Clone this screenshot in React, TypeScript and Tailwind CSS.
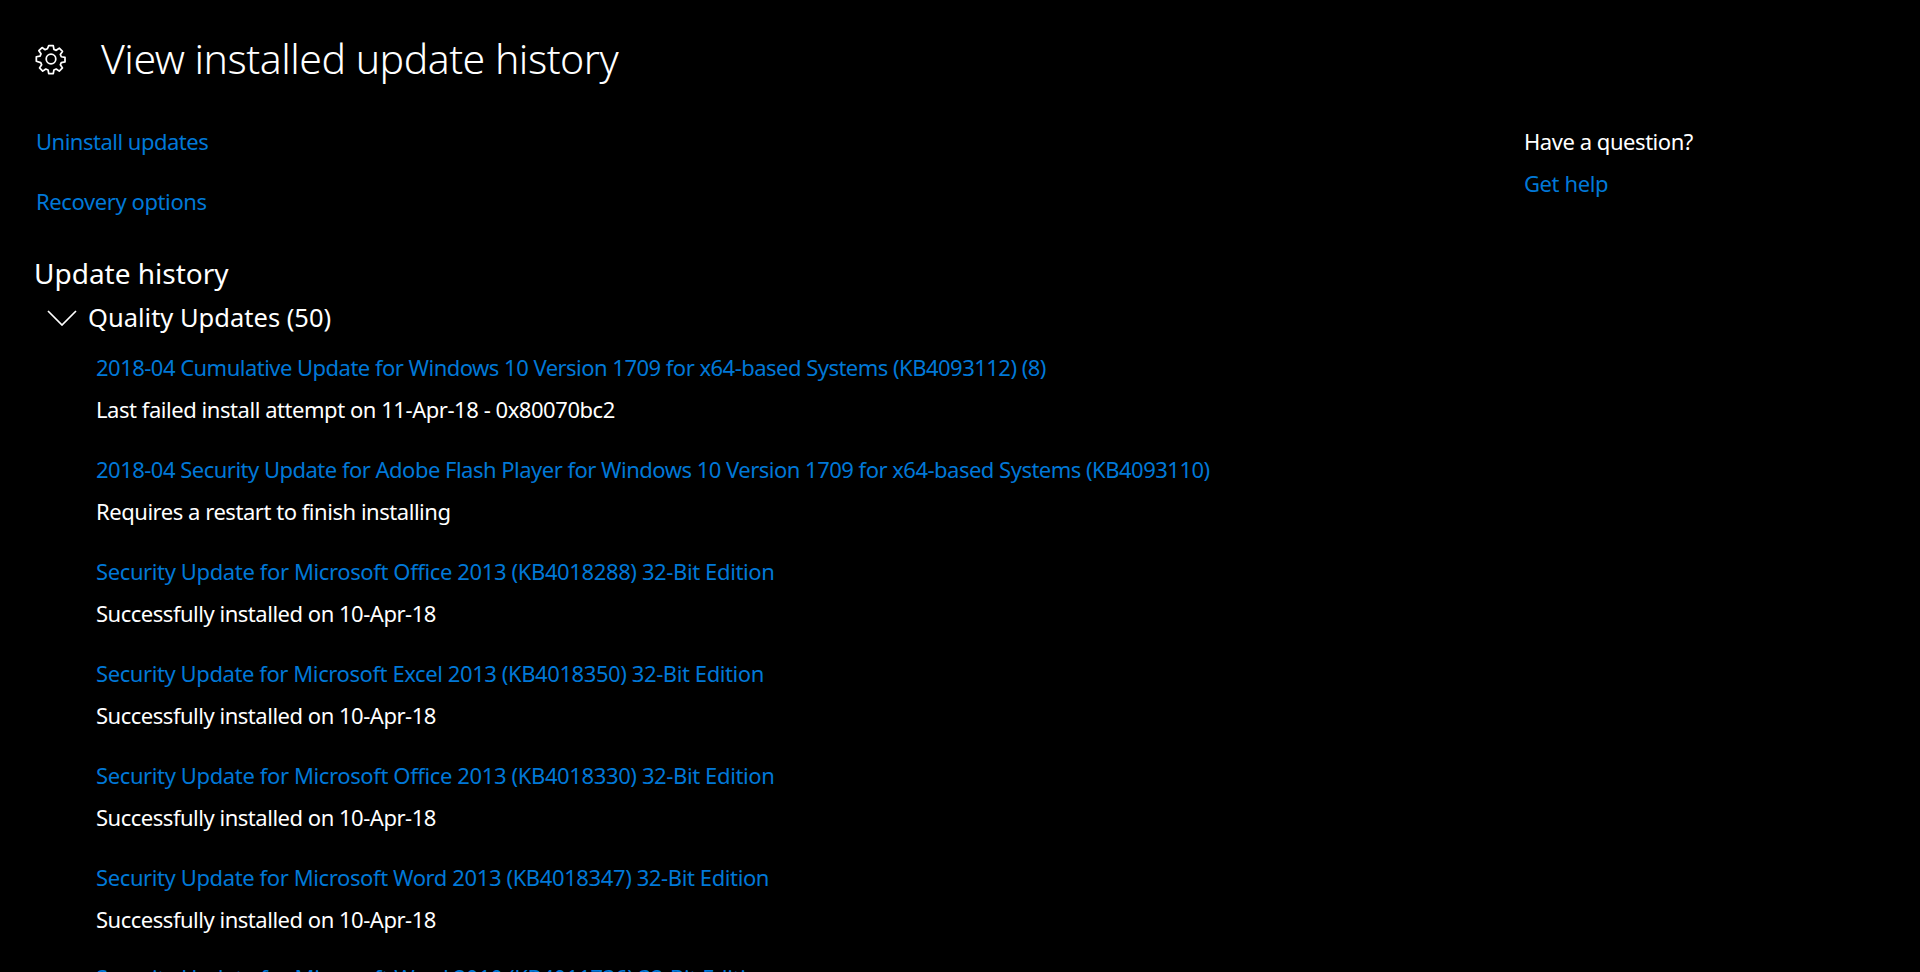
import React from "react";

const rows: { link: string; linkClass: string; status: string; statusClass: string }[] = [
  { link: "2018-04 Cumulative Update for Windows 10 Version 1709 for x64-based Systems (KB4093112) (8)", linkClass: "tracking-[-0.52px]", status: "Last failed install attempt on 11-Apr-18 - 0x80070bc2", statusClass: "tracking-[-0.45px]" },
  { link: "2018-04 Security Update for Adobe Flash Player for Windows 10 Version 1709 for x64-based Systems (KB4093110)", linkClass: "tracking-[-0.51px]", status: "Requires a restart to finish installing", statusClass: "tracking-[-0.46px]" },
  { link: "Security Update for Microsoft Office 2013 (KB4018288) 32-Bit Edition", linkClass: "tracking-[-0.38px]", status: "Successfully installed on 10-Apr-18", statusClass: "tracking-[-0.48px]" },
  { link: "Security Update for Microsoft Excel 2013 (KB4018350) 32-Bit Edition", linkClass: "tracking-[-0.41px]", status: "Successfully installed on 10-Apr-18", statusClass: "tracking-[-0.48px]" },
  { link: "Security Update for Microsoft Office 2013 (KB4018330) 32-Bit Edition", linkClass: "tracking-[-0.38px]", status: "Successfully installed on 10-Apr-18", statusClass: "tracking-[-0.48px]" },
  { link: "Security Update for Microsoft Word 2013 (KB4018347) 32-Bit Edition", linkClass: "tracking-[-0.39px]", status: "Successfully installed on 10-Apr-18", statusClass: "tracking-[-0.48px]" },
];

function Gear() {
  return (
    <svg width="32" height="32" viewBox="0 0 24 24" fill="none" stroke="white" strokeWidth="1.3" strokeLinejoin="round">
      <path d="M10.3 2h3.4l.5 2.8 1.7.7 2.3-1.6 2.4 2.4-1.6 2.3.7 1.7 2.8.5v3.4l-2.8.5-.7 1.7 1.6 2.3-2.4 2.4-2.3-1.6-1.7.7-.5 2.8h-3.4l-.5-2.8-1.7-.7-2.3 1.6-2.4-2.4 1.6-2.3-.7-1.7L1 13.7v-3.4l2.8-.5.7-1.7-1.6-2.3 2.4-2.4 2.3 1.6 1.7-.7z" />
      <circle cx="12" cy="12" r="3.6" />
    </svg>
  );
}

export default function App() {
  return (
    <div className="h-[972px] overflow-hidden bg-black text-white font-['Noto_Sans',sans-serif] text-[22px] leading-[30px] tracking-[-0.5px] flex justify-between">
      <div className="pl-[34px]">
        <div className="flex items-center h-[40px] mt-[39px] pl-[1px]">
          <Gear />
          <h1 className="ml-[34px] mb-[2px] text-[41px] font-light leading-[40px] tracking-[-0.5px]">View installed update history</h1>
        </div>
        <div className="mt-[47px] pl-[2px] text-[#0078d7]">Uninstall updates</div>
        <div className="mt-[30px] pl-[2px] text-[#0078d7] tracking-[-0.4px]">Recovery options</div>
        <h2 className="mt-[37px] text-[28px] leading-[40px] tracking-normal">Update history</h2>
        <div className="mt-[8px] flex items-center pl-[13px] text-[25.5px] leading-[32px] tracking-normal">
          <svg width="30" height="18" viewBox="0 0 30 18" fill="none" stroke="white" strokeWidth="1.7">
            <path d="M1 3l14 14L29 3" />
          </svg>
          <span className="ml-[11px]">Quality Updates (50)</span>
        </div>
        <div className="pl-[62px] mt-[19px]">
          {rows.map((r) => (
            <div key={r.link} className="h-[102px]">
              <div className={`text-[#0078d7] ${r.linkClass}`}>{r.link}</div>
              <div className={`mt-[12px] ${r.statusClass}`}>{r.status}</div>
            </div>
          ))}
          <div className="-mt-[2px] text-[#0078d7] tracking-[-0.35px]">Security Update for Microsoft Word 2010 (KB4011736) 32-Bit Edition</div>
        </div>
      </div>
      <div className="w-[396px] shrink-0 pt-[126px]">
        <div className="tracking-[-0.45px]">Have a question?</div>
        <div className="mt-[12px] text-[#0078d7] tracking-[-0.4px]">Get help</div>
      </div>
    </div>
  );
}
